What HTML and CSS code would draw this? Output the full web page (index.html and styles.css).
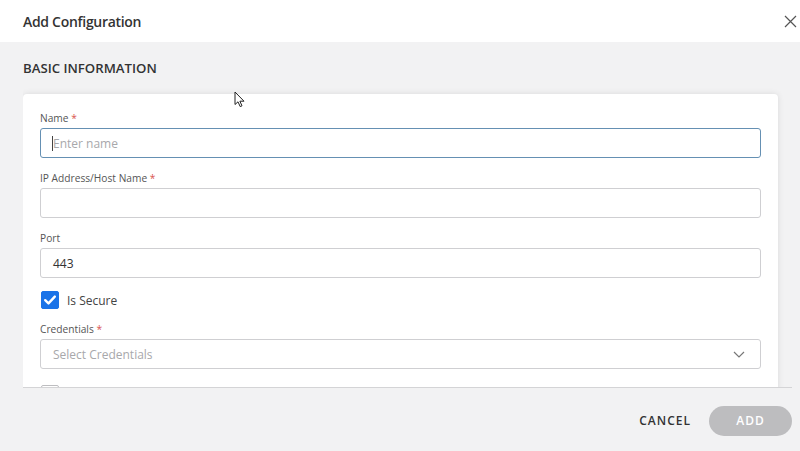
FILE: index.html
```html
<!DOCTYPE html>
<html>
<head>
<meta charset="utf-8">
<link rel="stylesheet" href="styles.css">
</head>
<body>
<div class="dialog">
  <header class="dlg-header">
    <h1 class="dlg-title">Add Configuration</h1>
    <button class="close-btn" aria-label="Close">
      <svg width="13" height="13" viewBox="0 0 13 13"><path d="M1 1L12 12M12 1L1 12" stroke="#555" stroke-width="1.2" fill="none"/></svg>
    </button>
  </header>
  <main class="dlg-body">
    <div class="scroll">
      <h2 class="section-title">BASIC INFORMATION</h2>
      <div class="card">
        <div class="field">
          <label class="label">Name <span class="req">*</span></label>
          <div class="input focused"><span class="caret"></span><span class="placeholder">Enter name</span></div>
        </div>
        <div class="field">
          <label class="label">IP Address/Host Name <span class="req">*</span></label>
          <div class="input"></div>
        </div>
        <div class="field">
          <label class="label">Port</label>
          <div class="input"><span class="value">443</span></div>
        </div>
        <div class="check-row">
          <span class="checkbox checked">
            <svg width="18" height="18" viewBox="0 0 18 18"><path d="M4.2 9.2L7.5 12.4L13.8 5.6" stroke="#fff" stroke-width="2.4" fill="none" stroke-linecap="round" stroke-linejoin="round"/></svg>
          </span>
          <span class="check-label">Is Secure</span>
        </div>
        <div class="field">
          <label class="label">Credentials <span class="req">*</span></label>
          <div class="input select"><span class="placeholder">Select Credentials</span>
            <svg class="chev" width="12" height="7" viewBox="0 0 12 7"><path d="M1 1L6 6L11 1" stroke="#777" stroke-width="1.2" fill="none"/></svg>
          </div>
        </div>
        <div class="check-row extra">
          <span class="checkbox"></span>
        </div>
      </div>
    </div>
    <footer class="dlg-footer">
      <button class="btn-cancel">CANCEL</button>
      <button class="btn-add">ADD</button>
    </footer>
  </main>
</div>
<svg class="cursor" width="12" height="18" viewBox="0 0 12 18"><path d="M1 1L1 13.5L4 10.8L6.2 15.6L8 14.8L5.9 10.2L10 10.2Z" fill="#fff" stroke="#222" stroke-width="1" stroke-linejoin="round"/></svg>
</body>
</html>
```
FILE: styles.css
```css
* { box-sizing: border-box; }
html, body { margin: 0; padding: 0; }
body {
  width: 800px;
  height: 451px;
  overflow: hidden;
  font-family: "Open Sans", "Noto Sans", sans-serif;
  background: #f2f2f3;
  position: relative;
}
.dialog {
  display: flex;
  flex-direction: column;
  height: 451px;
}
.dlg-header {
  height: 42px;
  background: #fff;
  display: flex;
  align-items: center;
  justify-content: space-between;
  padding: 0 0 0 23px;
  flex: none;
}
.dlg-title {
  margin: 0;
  font-size: 14px;
  font-weight: 600;
  color: #333;
  letter-spacing: -0.3px;
}
.close-btn {
  border: 0;
  background: transparent;
  padding: 0;
  width: 20px;
  height: 20px;
  display: flex;
  align-items: center;
  justify-content: center;
}
.dlg-body {
  flex: 1;
  display: flex;
  flex-direction: column;
  background: #f2f2f3;
}
.scroll {
  height: 346px;
  margin-left: 23px;
  margin-right: 8px;
  padding-right: 14px;
  overflow: hidden;
  border-bottom: 1px solid #d4d4d6;
  flex: none;
}
.section-title {
  margin: 16px 0 16px;
  font-size: 13.2px;
  font-weight: 600;
  color: #333;
  line-height: 20px;
}
.card {
  background: #fff;
  border-radius: 4px;
  box-shadow: 0 0 6px rgba(0,0,0,0.10);
  padding: 17px 17px 20px;
}
.field { margin-bottom: 13px; }
.label {
  display: block;
  font-size: 10.2px;
  line-height: 14px;
  height: 14px;
  margin-bottom: 3px;
  color: #555;
}
.req { color: #d9534f; }
.input {
  height: 30px;
  border: 1px solid #cfcfd2;
  border-radius: 3px;
  display: flex;
  align-items: center;
  padding: 0 12px;
  font-size: 12px;
  position: relative;
}
.input.focused {
  border: 1.5px solid #6590b3;
  padding-left: 11px;
}
.caret {
  width: 1px;
  height: 15px;
  background: #444;
}
.placeholder { color: #a8a8ab; }
.value { color: #333; }
.select { justify-content: space-between; }
.chev { margin-right: 3px; }
.check-row {
  display: flex;
  align-items: center;
  height: 18px;
  margin: 0 0 13px 1px;
}
.check-row.extra { margin-top: 16px; }
.checkbox {
  width: 18px;
  height: 18px;
  border: 1px solid #bdbdc0;
  border-radius: 2px;
  display: inline-flex;
  flex: none;
}
.checkbox.checked {
  background: #1a73e8;
  border-color: #1a73e8;
}
.checkbox.checked svg { margin: -1px; }
.check-label {
  margin-left: 8px;
  font-size: 12px;
  color: #444;
}
.dlg-footer {
  flex: 1;
  display: flex;
  align-items: center;
  justify-content: flex-end;
  padding: 2px 8px 0 0;
  gap: 18px;
}
.btn-cancel {
  border: 0;
  background: transparent;
  font-family: inherit;
  font-size: 12px;
  font-weight: 600;
  letter-spacing: 1px;
  color: #333;
  padding: 0;
}
.btn-add {
  border: 0;
  width: 83px;
  height: 30px;
  border-radius: 15px;
  background: #bdbdbf;
  color: #fff;
  font-family: inherit;
  font-size: 12px;
  font-weight: 600;
  letter-spacing: 1px;
}
.cursor {
  position: absolute;
  left: 234px;
  top: 91px;
}
```
